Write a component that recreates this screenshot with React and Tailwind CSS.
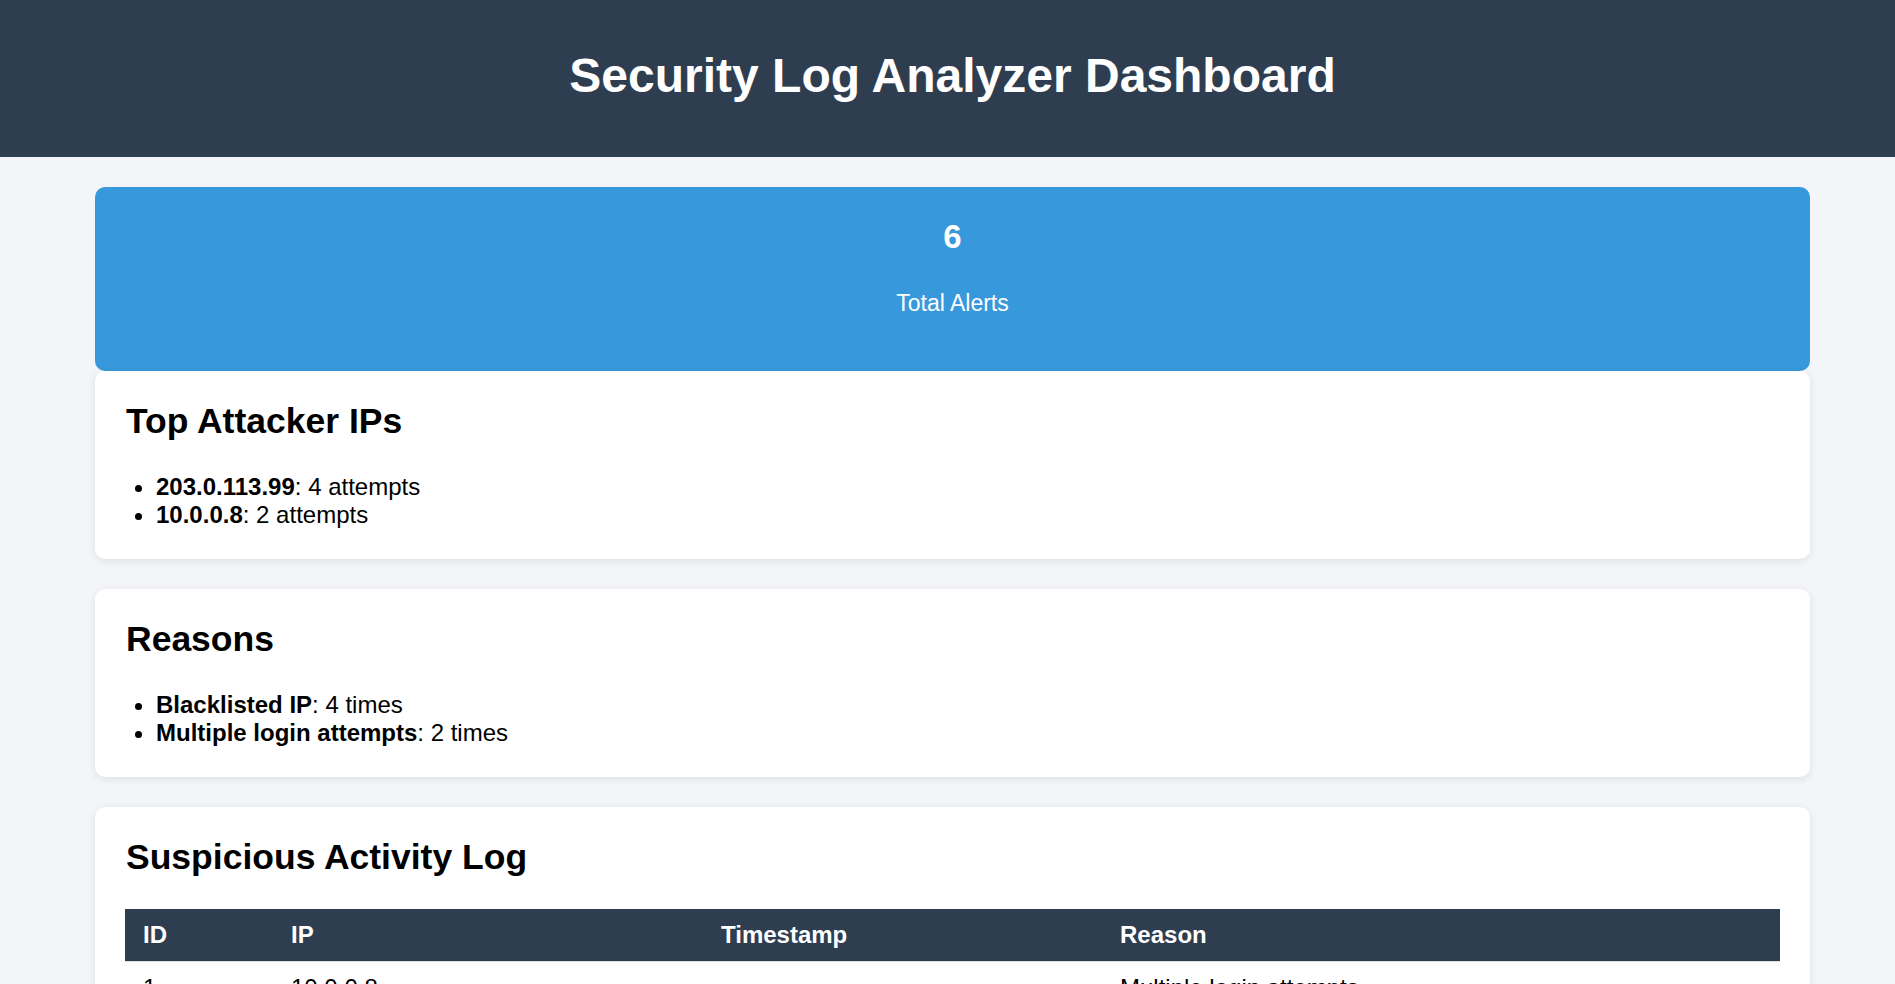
import React from 'react';

const topIps = [
  { ip: '203.0.113.99', count: 4 },
  { ip: '10.0.0.8', count: 2 },
];

const reasons = [
  { reason: 'Blacklisted IP', count: 4 },
  { reason: 'Multiple login attempts', count: 2 },
];

const logs = [
  { id: 1, ip: '10.0.0.8', timestamp: '', reason: 'Multiple login attempts' },
  { id: 2, ip: '10.0.0.8', timestamp: '', reason: 'Multiple login attempts' },
  { id: 3, ip: '203.0.113.99', timestamp: '', reason: 'Blacklisted IP' },
  { id: 4, ip: '203.0.113.99', timestamp: '', reason: 'Blacklisted IP' },
  { id: 5, ip: '203.0.113.99', timestamp: '', reason: 'Blacklisted IP' },
  { id: 6, ip: '203.0.113.99', timestamp: '', reason: 'Blacklisted IP' },
];

function Card({ title, children }) {
  return (
    <section className="bg-white rounded-[10px] shadow-[0_2px_8px_rgba(0,0,0,0.09)] p-[30px] pl-[31px] mb-[30px]">
      <h2 className="text-[35.5px] font-bold leading-[normal] text-black mb-[31px]">{title}</h2>
      {children}
    </section>
  );
}

export default function App() {
  return (
    <div className="min-h-screen bg-[#f4f5f9] text-black text-[24px] leading-[normal] font-['Liberation_Sans',Arial,sans-serif]">
      {/* HEADER */}
      <header className="bg-[#2e3e50] h-[157px] flex items-center justify-center pl-[10px] pb-[6px]">
        <h1 className="text-[48px] font-bold text-white leading-[normal]">Security Log Analyzer Dashboard</h1>
      </header>

      <main className="pl-[95px] pr-[85px] pt-[30px] pb-[30px]">
        {/* TOTAL ALERTS */}
        <div className="h-[184px] rounded-[10px] bg-[#3798db] text-white text-center pt-[31px]">
          <div className="text-[33px] font-bold leading-[normal]">6</div>
          <p className="text-[23px] leading-[normal] mt-[34px]">Total Alerts</p>
        </div>

        <Card title="Top Attacker IPs">
          <ul className="list-disc pl-[30px]">
            {topIps.map((item) => (
              <li key={item.ip}>
                <strong className="font-bold">{item.ip}</strong>: {item.count} attempts
              </li>
            ))}
          </ul>
        </Card>

        <Card title="Reasons">
          <ul className="list-disc pl-[30px]">
            {reasons.map((item) => (
              <li key={item.reason}>
                <strong className="font-bold">{item.reason}</strong>: {item.count} times
              </li>
            ))}
          </ul>
        </Card>

        <Card title="Suspicious Activity Log">
          <table className="w-[calc(100%+1px)] -ml-px table-fixed border-collapse">
            <thead>
              <tr>
                <th className="w-[148px] bg-[#2e3e50] text-white text-left font-bold px-[18px] py-[12px] border-b border-[#ddd]">ID</th>
                <th className="w-[430px] bg-[#2e3e50] text-white text-left font-bold px-[18px] py-[12px] border-b border-[#ddd]">IP</th>
                <th className="w-[399px] bg-[#2e3e50] text-white text-left font-bold px-[18px] py-[12px] border-b border-[#ddd]">Timestamp</th>
                <th className="bg-[#2e3e50] text-white text-left font-bold px-[18px] py-[12px] border-b border-[#ddd]">Reason</th>
              </tr>
            </thead>
            <tbody>
              {logs.map((row) => (
                <tr key={row.id}>
                  <td className="px-[18px] py-[12px] border-b border-[#ddd]">{row.id}</td>
                  <td className="px-[18px] py-[12px] border-b border-[#ddd]">{row.ip}</td>
                  <td className="px-[18px] py-[12px] border-b border-[#ddd]">{row.timestamp}</td>
                  <td className="px-[18px] py-[12px] border-b border-[#ddd]">{row.reason}</td>
                </tr>
              ))}
            </tbody>
          </table>
        </Card>
      </main>
    </div>
  );
}
